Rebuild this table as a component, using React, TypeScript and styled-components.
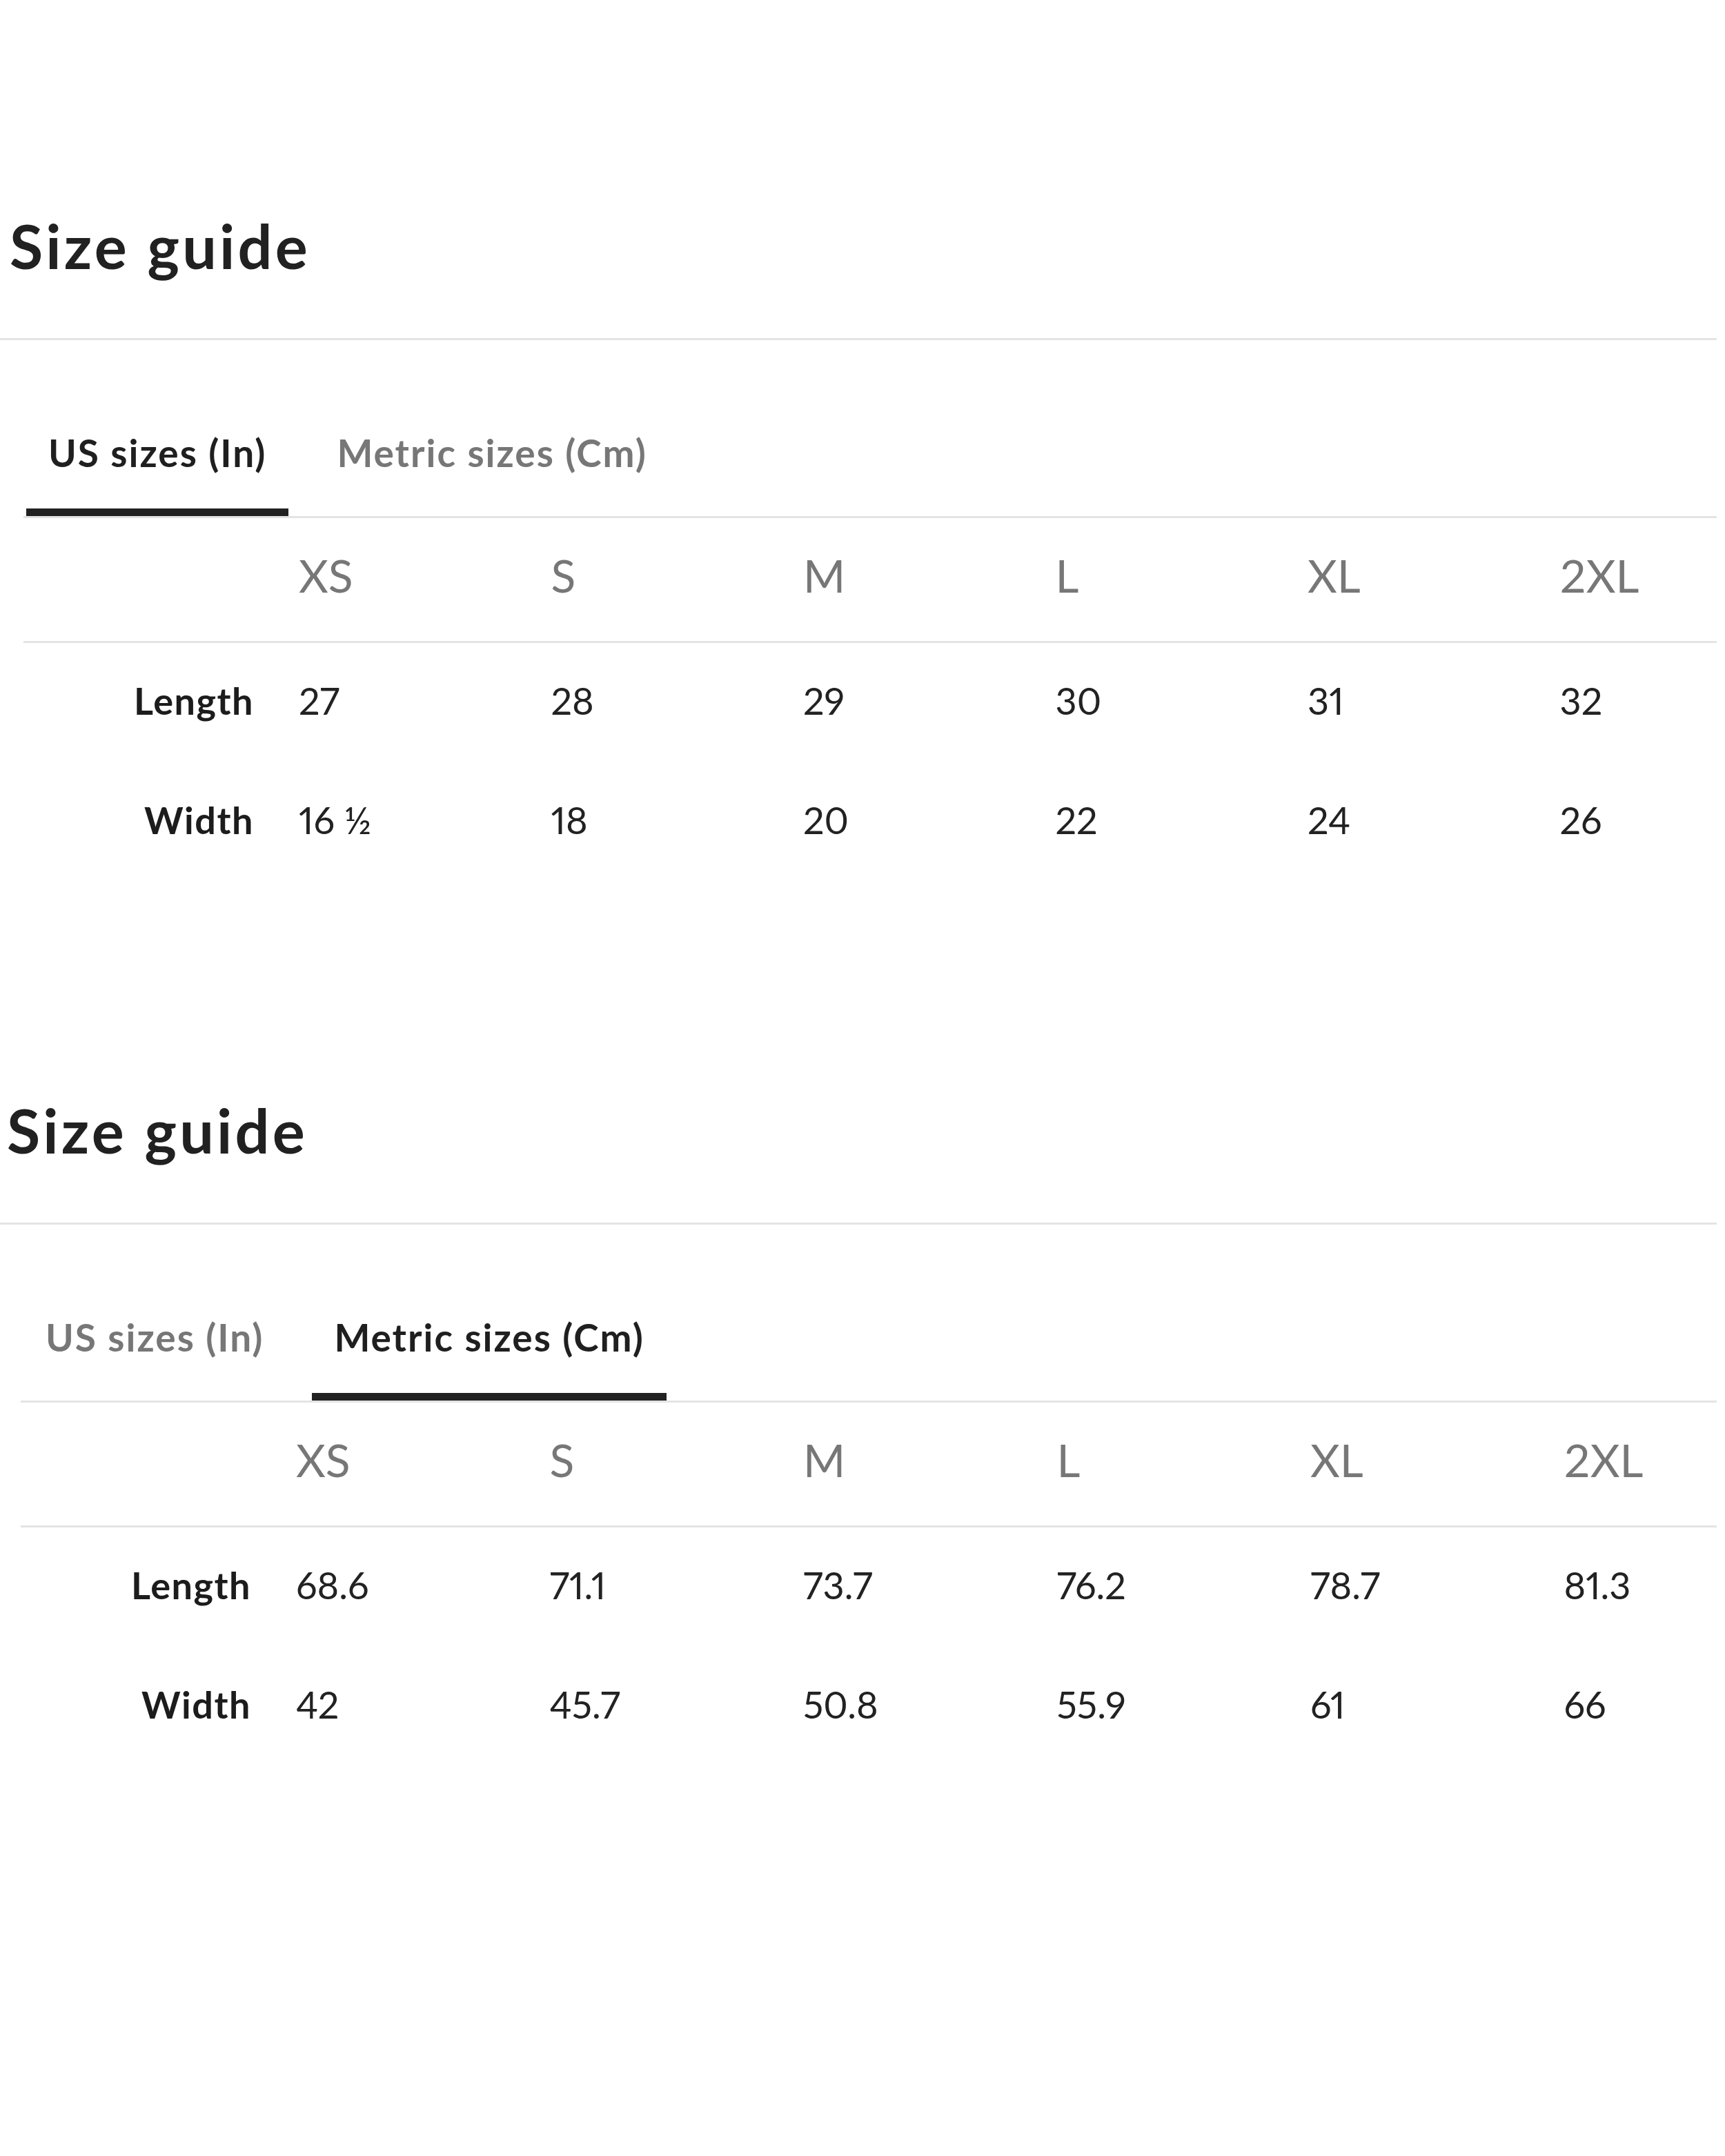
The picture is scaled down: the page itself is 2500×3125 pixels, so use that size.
import { FC } from 'react';
import styled, { createGlobalStyle } from 'styled-components';

const GlobalStyle = createGlobalStyle`
    html, body {
        margin: 0;
        padding: 0;
        background: #ffffff;
    }
    body {
        font-family: 'Lato', 'Liberation Sans', sans-serif;
        color: #222222;
        overflow-x: hidden;
    }
`;

type Chart = {
    sizes: string[];
    rows: [string, string[]][];
};

const US_CHART: Chart = {
    sizes: ['XS', 'S', 'M', 'L', 'XL', '2XL'],
    rows: [
        ['Length', ['27', '28', '29', '30', '31', '32']],
        ['Width', ['16 ½', '18', '20', '22', '24', '26']],
    ],
};

const METRIC_CHART: Chart = {
    sizes: ['XS', 'S', 'M', 'L', 'XL', '2XL'],
    rows: [
        ['Length', ['68.6', '71.1', '73.7', '76.2', '78.7', '81.3']],
        ['Width', ['42', '45.7', '50.8', '55.9', '61', '66']],
    ],
};

const Page = styled.div`
    width: 2488px;
    overflow: hidden;
`;

const Section = styled.section`
    display: flex;
    flex-direction: column;
    padding-top: 313px;
    padding-bottom: 4px;
`;

const Title = styled.h2<{ $shift: number }>`
    margin: 0 0 90px;
    padding-left: ${(p) => 14 + p.$shift}px;
    font-size: 88px;
    line-height: 87px;
    font-weight: 700;
    letter-spacing: 4.2px;
    color: #212121;
`;

const Rule = styled.hr`
    margin: 0;
    border: none;
    height: 3px;
    background: #e4e4e4;
`;

const TabBar = styled.div<{ $shift: number }>`
    display: flex;
    gap: 38px;
    margin-left: ${(p) => 34 + p.$shift}px;
    padding-top: 136px;
    padding-left: 4px;
    border-bottom: 3px solid #e4e4e4;
`;

const Tab = styled.button<{ $active?: boolean }>`
    padding: 0 32px 53px;
    margin: 0;
    border: none;
    border-bottom: 11px solid ${(p) => (p.$active ? '#222222' : 'transparent')};
    background: none;
    font-family: 'Lato', 'Liberation Sans', sans-serif;
    font-size: 55px;
    line-height: 55px;
    font-weight: 700;
    letter-spacing: 2px;
    color: ${(p) => (p.$active ? '#1f1f1f' : '#777777')};
    cursor: pointer;
`;

const Table = styled.div<{ $shift: number }>`
    margin-left: ${(p) => 34 + p.$shift}px;
    display: flex;
    flex-direction: column;
`;

const Row = styled.div<{ $col: number; $head?: boolean }>`
    display: grid;
    grid-template-columns: 366px repeat(6, ${(p) => p.$col}px);
    border-bottom: ${(p) => (p.$head ? '3px solid #e4e4e4' : 'none')};
`;

const HeadCell = styled.div`
    padding: 50px 33px 62px;
    font-size: 66px;
    line-height: 66px;
    font-weight: 400;
    color: #777777;
    white-space: nowrap;
`;

const Label = styled.div`
    padding: 57px 32px 62px 0;
    text-align: right;
    font-size: 54px;
    line-height: 54px;
    font-weight: 700;
    letter-spacing: 1.5px;
    color: #1c1c1c;
`;

const Value = styled.div`
    padding: 57px 33px 62px;
    font-size: 54px;
    line-height: 54px;
    font-weight: 400;
    font-variant-numeric: proportional-nums;
    color: #222222;
    white-space: nowrap;
`;

const SizeGuide: FC<{ chart: Chart; active: 'us' | 'metric'; shift: number; col: number }> = ({
    chart,
    active,
    shift,
    col,
}) => (
    <Section>
        <Title $shift={shift}>Size guide</Title>
        <Rule />
        <TabBar $shift={shift}>
            <Tab $active={active === 'us'}>US sizes (In)</Tab>
            <Tab $active={active === 'metric'}>Metric sizes (Cm)</Tab>
        </TabBar>
        <Table $shift={shift}>
            <Row $col={col} $head>
                <HeadCell />
                {chart.sizes.map((size) => (
                    <HeadCell key={size}>{size}</HeadCell>
                ))}
            </Row>
            {chart.rows.map(([label, values]) => (
                <Row $col={col} key={label}>
                    <Label>{label}</Label>
                    {values.map((v, i) => (
                        <Value key={i}>{v}</Value>
                    ))}
                </Row>
            ))}
        </Table>
    </Section>
);

export default function App() {
    return (
        <Page>
            <GlobalStyle />
            <SizeGuide chart={US_CHART} active="us" shift={0} col={365.5} />
            <SizeGuide chart={METRIC_CHART} active="metric" shift={-4} col={367.5} />
        </Page>
    );
}
